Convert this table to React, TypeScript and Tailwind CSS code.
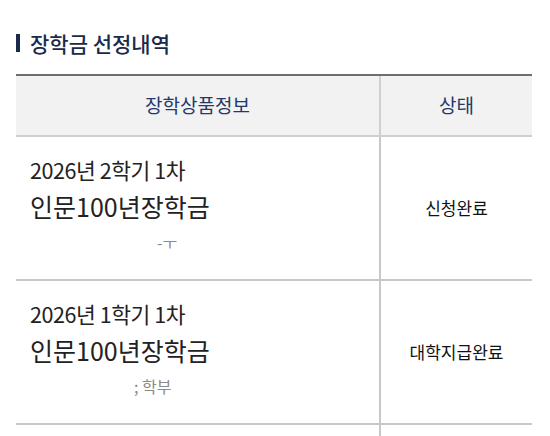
import React from "react";

const rows = [
  { term: "2026년 2학기 1차", name: "인문100년장학금", dept: "-ㅜ", deptPad: "pl-[127px]", status: "신청완료" },
  { term: "2026년 1학기 1차", name: "인문100년장학금", dept: "; 학부", deptPad: "pl-[104px]", status: "대학지급완료" },
];

const App = () => {
  return (
    <div className="w-[550px] h-[436px] overflow-hidden bg-white font-['Noto_Sans_CJK_KR','Noto_Sans',sans-serif]">
      <div className="pl-4 pt-[31px]">
        <h2 className="flex items-center gap-[10px] text-[21px] leading-[24px] font-medium text-[#1a2a4d]">
          <span className="block w-[4px] h-[18px] bg-[#1a2a4d]"></span>
          장학금 선정내역
        </h2>

        <div className="mt-[19px] w-[516px] border-t-2 border-[#6e6e6e]">
          {/* header */}
          <div className="grid grid-cols-[365px_151px] bg-[#f2f2f2] border-b-2 border-[#cfcfcf] text-[19px] text-[#24396a]">
            <div className="h-[59px] flex items-center justify-center border-r-2 border-[#cfcfcf]">
              장학상품정보
            </div>
            <div className="h-[59px] flex items-center justify-center">상태</div>
          </div>

          {rows.map((r, i) => (
            <div key={i} className="grid grid-cols-[365px_151px] border-b-2 border-[#c8c8c8]">
              <div className="h-[142px] pl-[14px] pt-[15px] border-r-2 border-[#c8c8c8] text-[#222]">
                <p className="text-[21.5px] leading-[36px] tracking-[-0.02em]">{r.term}</p>
                <p className="text-[25px] leading-[36px]">{r.name}</p>
                <p className={`text-[16px] leading-[36px] text-[#8a8a8a] ${r.deptPad}`}>{r.dept}</p>
              </div>
              <div className="h-[142px] flex items-center justify-center text-[17px] text-[#111]">
                {r.status}
              </div>
            </div>
          ))}

          <div className="grid grid-cols-[365px_151px]">
            <div className="h-[40px] border-r-2 border-[#c8c8c8]"></div>
            <div></div>
          </div>
        </div>
      </div>
    </div>
  );
};

export default App;
